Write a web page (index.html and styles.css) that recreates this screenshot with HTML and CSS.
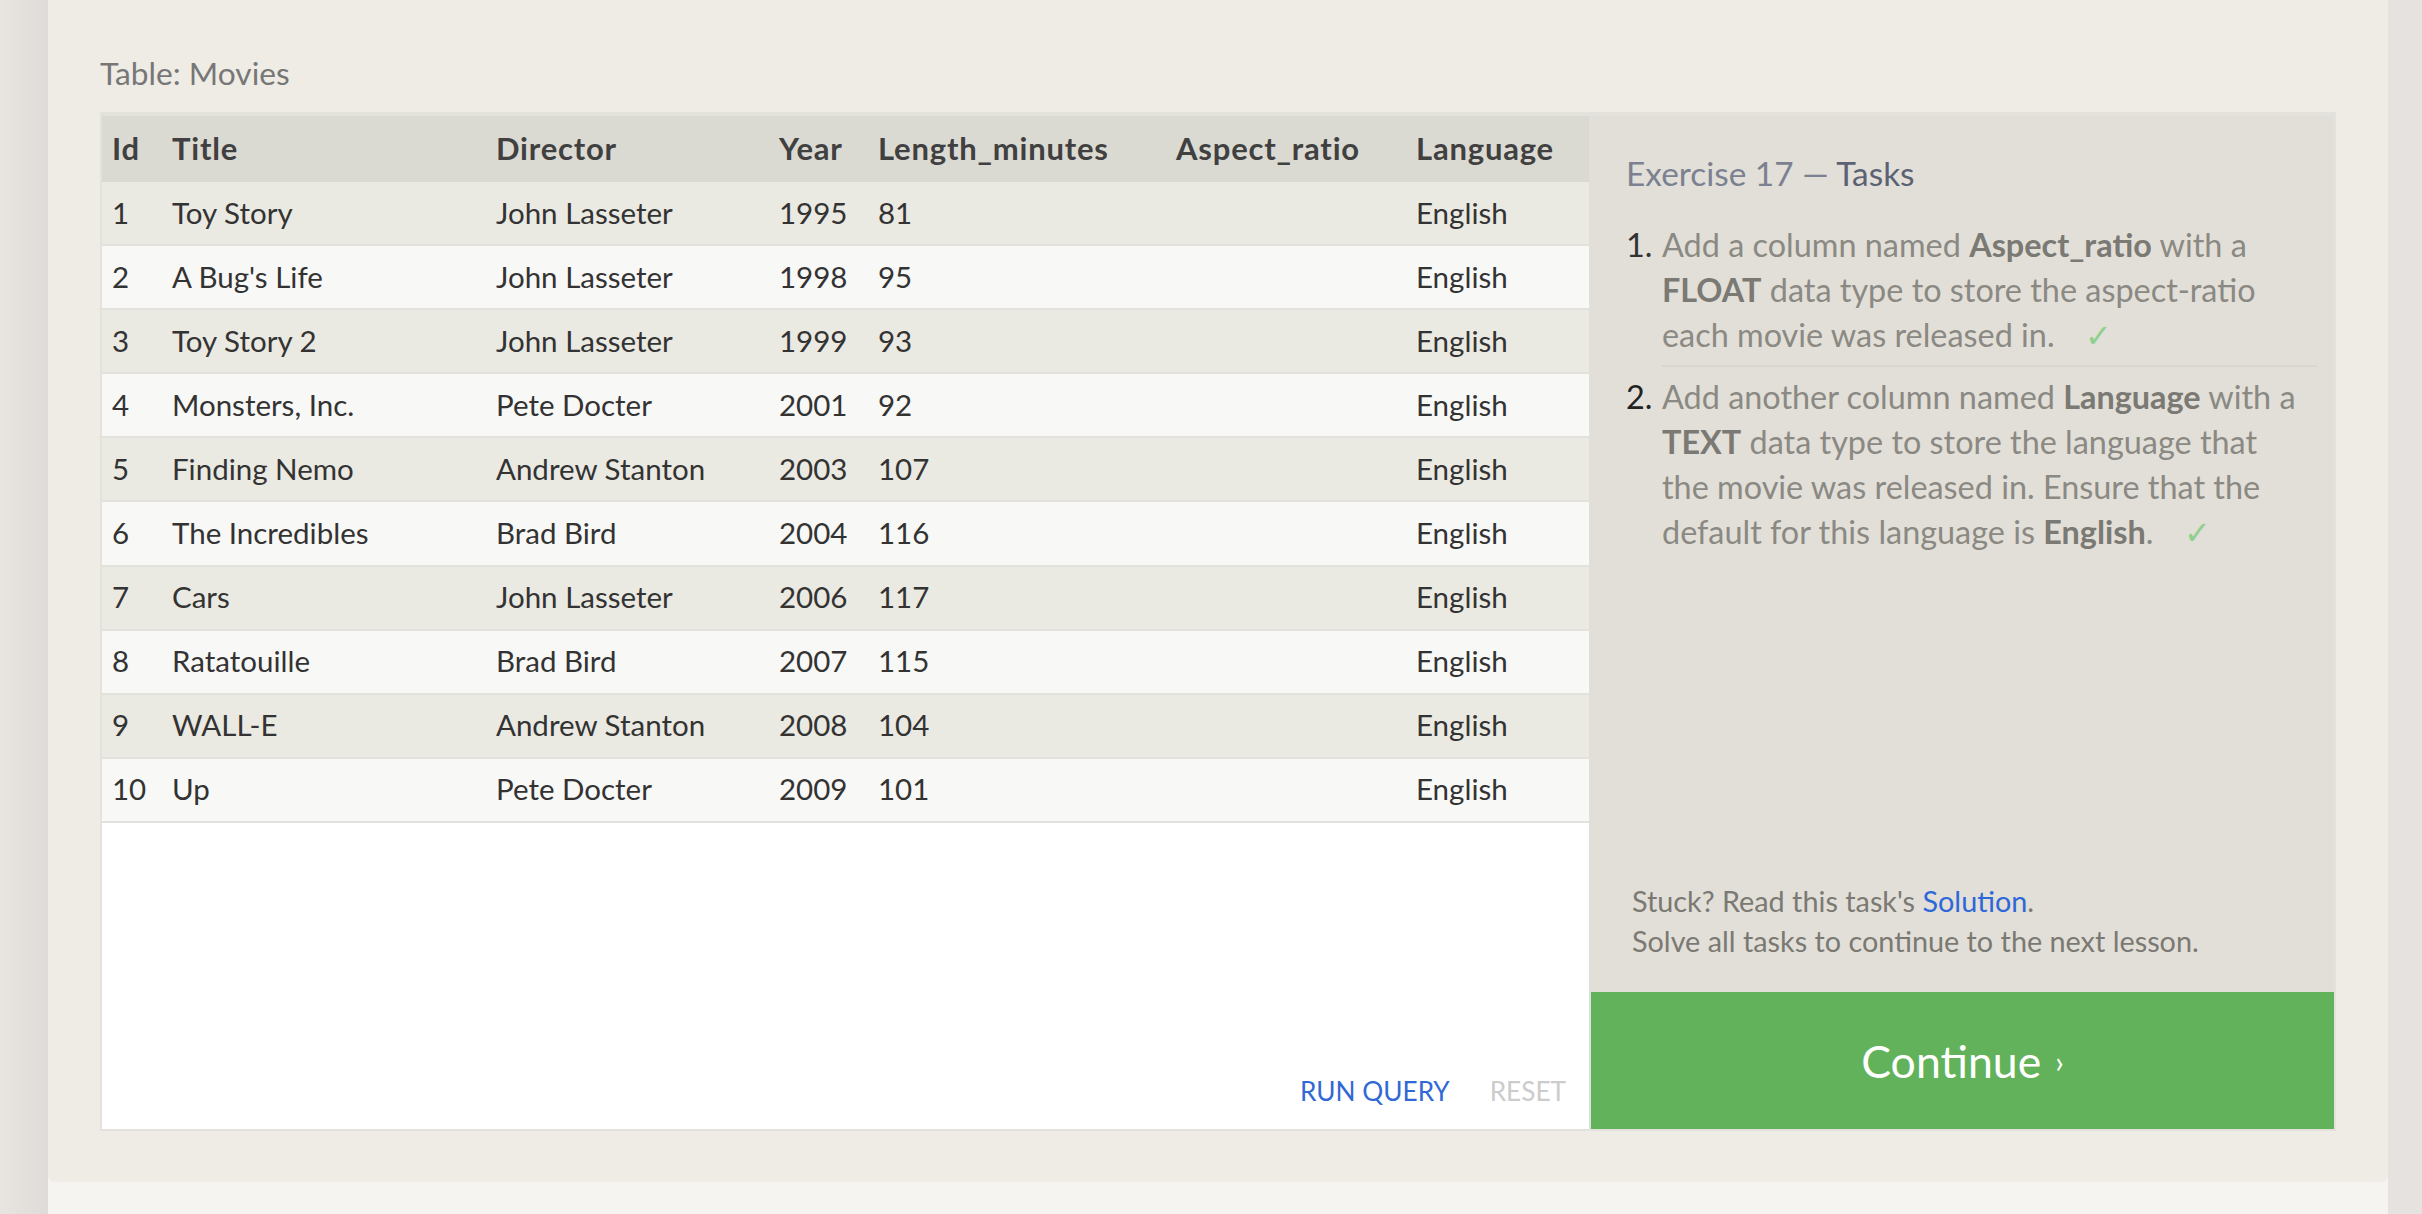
FILE: index.html
```html
<!DOCTYPE html>
<html lang="en">
<head>
<meta charset="utf-8">
<title>SQL Exercise 17 — Tasks</title>
<link rel="stylesheet" href="styles.css">
</head>
<body>
<div class="page">
  <div class="strip strip-left"></div>
  <div class="center">
    <main class="panel">
      <div class="table-label">Table: Movies</div>
      <div class="exercise">
        <section class="results">
          <table class="movies">
            <colgroup>
              <col class="c-id"><col class="c-title"><col class="c-director"><col class="c-year"><col class="c-length"><col class="c-aspect"><col class="c-lang">
            </colgroup>
            <thead>
              <tr><th>Id</th><th>Title</th><th>Director</th><th>Year</th><th>Length_minutes</th><th>Aspect_ratio</th><th>Language</th></tr>
            </thead>
            <tbody>
              <tr><td>1</td><td>Toy Story</td><td>John Lasseter</td><td>1995</td><td>81</td><td></td><td>English</td></tr>
              <tr><td>2</td><td>A Bug's Life</td><td>John Lasseter</td><td>1998</td><td>95</td><td></td><td>English</td></tr>
              <tr><td>3</td><td>Toy Story 2</td><td>John Lasseter</td><td>1999</td><td>93</td><td></td><td>English</td></tr>
              <tr><td>4</td><td>Monsters, Inc.</td><td>Pete Docter</td><td>2001</td><td>92</td><td></td><td>English</td></tr>
              <tr><td>5</td><td>Finding Nemo</td><td>Andrew Stanton</td><td>2003</td><td>107</td><td></td><td>English</td></tr>
              <tr><td>6</td><td>The Incredibles</td><td>Brad Bird</td><td>2004</td><td>116</td><td></td><td>English</td></tr>
              <tr><td>7</td><td>Cars</td><td>John Lasseter</td><td>2006</td><td>117</td><td></td><td>English</td></tr>
              <tr><td>8</td><td>Ratatouille</td><td>Brad Bird</td><td>2007</td><td>115</td><td></td><td>English</td></tr>
              <tr><td>9</td><td>WALL-E</td><td>Andrew Stanton</td><td>2008</td><td>104</td><td></td><td>English</td></tr>
              <tr><td>10</td><td>Up</td><td>Pete Docter</td><td>2009</td><td>101</td><td></td><td>English</td></tr>
            </tbody>
          </table>
          <div class="actions">
            <a class="run" href="#">RUN QUERY</a>
            <a class="reset" href="#">RESET</a>
          </div>
        </section>
        <section class="tasks">
          <h2 class="tasks-title">Exercise 17 — <span class="tasks-word">Tasks</span></h2>
          <ol class="task-list">
            <li class="task"><span class="num">1.</span><span class="task-text">Add a column named <b>Aspect_ratio</b> with a <b>FLOAT</b> data type to store the aspect-ratio each movie was released in. <span class="check">✓</span></span></li>
            <li class="task"><span class="num">2.</span><span class="task-text">Add another column named <b>Language</b> with a <b>TEXT</b> data type to store the language that the movie was released in. Ensure that the default for this language is <b>English</b>. <span class="check">✓</span></span></li>
          </ol>
          <div class="help">
            <p>Stuck? Read this task's <a href="#">Solution</a>.</p>
            <p>Solve all tasks to continue to the next lesson.</p>
          </div>
          <a class="continue" href="#">Continue <span class="chev">›</span></a>
        </section>
      </div>
    </main>
  </div>
  <div class="strip strip-right"></div>
</div>
</body>
</html>
```
FILE: styles.css
```css
* { box-sizing: border-box; }
html, body { margin: 0; padding: 0; }
body {
  width: 2422px;
  height: 1214px;
  overflow: hidden;
  background: #f5f4f0;
  font-family: "Lato", "Open Sans", sans-serif;
  color: #333;
}
.page { display: flex; height: 1214px; }
.strip { flex: 0 0 auto; height: 100%; }
.strip-left { width: 48px; background: linear-gradient(to right, #e8e5e1, #dfdbd8); }
.strip-right { width: 34px; background: #e5e2df; }
.center { flex: 1 1 auto; background: #f5f4f0; }
.panel {
  height: 1182px;
  background: #efece6;
  border-radius: 0 0 6px 6px;
  padding: 55px 52px 0 52px;
}
.table-label {
  font-size: 31.7px;
  line-height: 36px;
  color: #777;
  margin-bottom: 21px;
}
.exercise {
  display: flex;
  height: 1019px;
  border: 2px solid #e3e2dc;
  border-top-width: 4px;
}
.results {
  width: 1489px;
  flex: 0 0 auto;
  background: #fff;
  border-right: 2px solid #e0dfd9;
  display: flex;
  flex-direction: column;
}
.movies {
  width: 1487px;
  table-layout: fixed;
  border-collapse: separate;
  border-spacing: 0;
  font-size: 29.5px;
}
.c-id { width: 60px; }
.c-title { width: 324px; }
.c-director { width: 283px; }
.c-year { width: 99px; }
.c-length { width: 298px; }
.c-aspect { width: 240px; }
.c-lang { width: 183px; }
.movies th, .movies td {
  text-align: left;
  padding: 0 0 2px 10px;
  white-space: nowrap;
  vertical-align: middle;
}
.movies thead tr { height: 66px; background: #dbdad2; }
.movies th { font-weight: 700; font-size: 31px; letter-spacing: 0.8px; color: #404040; }
.movies tbody tr { height: 64.1px; }
.movies tbody td { border-bottom: 2px solid #e2e1dc; color: #333; }
.movies tbody tr:nth-child(odd) { background: #eae9e2; }
.movies tbody tr:nth-child(even) { background: #f8f8f7; }
.actions {
  margin-top: auto;
  display: flex;
  justify-content: flex-end;
  gap: 40px;
  padding: 0 23px 20px 0;
  font-size: 26.2px;
  line-height: 36px;
}
.actions a { text-decoration: none; }
.run { color: #3068d6; }
.reset { color: #cccccc; }
.tasks {
  flex: 1 1 auto;
  background: #e2dfd8;
  display: flex;
  flex-direction: column;
}
.tasks-title {
  margin: 37px 0 0 35px;
  font-size: 33.4px;
  line-height: 40px;
  font-weight: 400;
  color: #7b8190;
}
.tasks-word { color: #5b6273; }
.task-list {
  list-style: none;
  margin: 30px 17px 0 35px;
  padding: 0;
  font-size: 32.4px;
  line-height: 44.8px;
  color: #8a8983;
}
.task { display: flex; }
.num { width: 36px; flex: 0 0 auto; color: #333; }
.task-text { flex: 1 1 auto; padding-right: 10px; }
.task-text b { color: #7a7973; font-weight: 700; }
.task:first-child .task-text { border-bottom: 2px solid #d9d7cf; padding-bottom: 8px; }
.task + .task { margin-top: 8px; }
.task:last-child .num { color: #222; }
.check { color: #8fd08c; margin-left: 22px; }
.help {
  margin: auto 0 0 41px;
  font-size: 28.8px;
  line-height: 40px;
  color: #7a7973;
}
.help p { margin: 0; }
.help a { color: #2d68d8; text-decoration: none; }
.continue {
  margin-top: 31px;
  height: 137px;
  background: #61b25a;
  color: #fff;
  text-decoration: none;
  font-size: 44.6px;
  display: flex;
  align-items: center;
  justify-content: center;
  gap: 14px;
}
.chev { font-size: 30px; }
```
